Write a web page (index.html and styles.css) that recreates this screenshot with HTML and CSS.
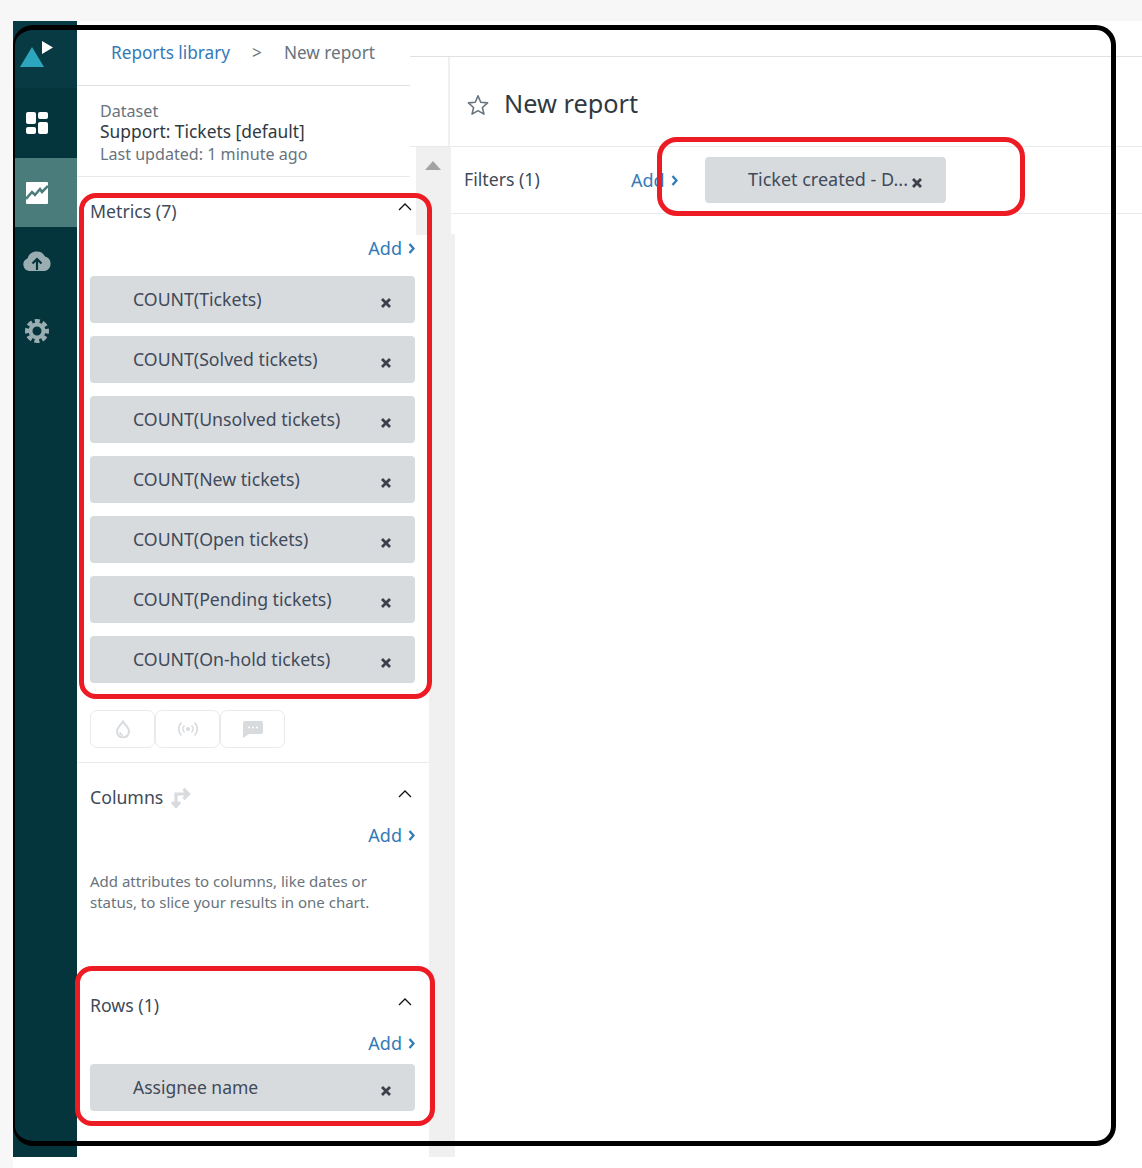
FILE: index.html
```html
<!DOCTYPE html>
<html lang="en">
<head>
<meta charset="utf-8">
<title>New report</title>
<link rel="stylesheet" href="styles.css">
</head>
<body>
<div class="app">
  <nav class="nav">
    <div class="nav-logo">
      <svg width="64" height="67" viewBox="0 0 64 67"><path d="M7 46 L19 26 L31 46Z" fill="#2ba6bd"/><path d="M29 20 V33 L40 26.500Z" fill="#fff"/></svg>
    </div>
    <div class="nav-item first">
      <svg width="22" height="22" viewBox="0 0 22 22" fill="#fff"><rect x="0" y="0" width="10" height="12" rx="2"/><rect x="12" y="0" width="10" height="7" rx="2"/><rect x="0" y="15" width="10" height="7" rx="2"/><rect x="12" y="10" width="10" height="12" rx="2"/></svg>
    </div>
    <div class="nav-item active">
      <svg width="22" height="22" viewBox="0 0 22 22"><rect width="22" height="22" rx="1" fill="#fff"/><path d="M0 17 L6 10 L9 13 L14 7 L16 10 L22 4" fill="none" stroke="#4a7c7b" stroke-width="2.500"/></svg>
    </div>
    <div class="nav-item dim">
      <svg class="cloud" width="30" height="22" viewBox="0 0 30 22"><path d="M7 22 A6.500 6.500 0 0 1 5.500 9.500 A9.500 9.500 0 0 1 23 7.500 A7.500 7.500 0 0 1 23 22Z" fill="#9aaeb1"/><path d="M15 21 V11 M10.500 14.500 L15 10 L19.500 14.500" fill="none" stroke="#04343c" stroke-width="2.200"/></svg>
    </div>
    <div class="nav-item dim">
      <svg width="24" height="24" viewBox="0 0 24 24" fill="none" stroke="#9aaeb1"><circle cx="12" cy="12" r="6.500" stroke-width="4"/><circle cx="12" cy="12" r="10" stroke-width="4" stroke-dasharray="5 2.854" stroke-dashoffset="2.500"/></svg>
    </div>
  </nav>
  <div class="content">
    <aside class="panel">
      <div class="crumbs">
        <a class="link">Reports library</a><span class="sep">&gt;</span><span class="crumb-now">New report</span>
      </div>
      <div class="dataset">
        <div class="muted first-line">Dataset</div>
        <div class="dataset-name">Support: Tickets [default]</div>
        <div class="muted">Last updated: 1 minute ago</div>
      </div>
      <section class="section metrics">
        <div class="sec-head"><span>Metrics (7)</span><svg class="caret" width="14" height="8" viewBox="0 0 14 8"><path d="M1 7 L7 1 L13 7" fill="none" stroke="#111" stroke-width="1.300"/></svg></div>
        <div class="add-row"><a class="link">Add</a><svg class="chev" width="7" height="11" viewBox="0 0 7 11"><path d="M1.500 1 L5.500 5.500 L1.500 10" fill="none" stroke="#337ab7" stroke-width="2.300"/></svg></div>
        <div class="chips">
          <div class="chip"><span>COUNT(Tickets)</span><svg class="x" width="10" height="10" viewBox="0 0 10 10"><path d="M1 1 L9 9 M9 1 L1 9" stroke="#3d3f4a" stroke-width="2.800"/></svg></div>
          <div class="chip"><span>COUNT(Solved tickets)</span><svg class="x" width="10" height="10" viewBox="0 0 10 10"><path d="M1 1 L9 9 M9 1 L1 9" stroke="#3d3f4a" stroke-width="2.800"/></svg></div>
          <div class="chip"><span>COUNT(Unsolved tickets)</span><svg class="x" width="10" height="10" viewBox="0 0 10 10"><path d="M1 1 L9 9 M9 1 L1 9" stroke="#3d3f4a" stroke-width="2.800"/></svg></div>
          <div class="chip"><span>COUNT(New tickets)</span><svg class="x" width="10" height="10" viewBox="0 0 10 10"><path d="M1 1 L9 9 M9 1 L1 9" stroke="#3d3f4a" stroke-width="2.800"/></svg></div>
          <div class="chip"><span>COUNT(Open tickets)</span><svg class="x" width="10" height="10" viewBox="0 0 10 10"><path d="M1 1 L9 9 M9 1 L1 9" stroke="#3d3f4a" stroke-width="2.800"/></svg></div>
          <div class="chip"><span>COUNT(Pending tickets)</span><svg class="x" width="10" height="10" viewBox="0 0 10 10"><path d="M1 1 L9 9 M9 1 L1 9" stroke="#3d3f4a" stroke-width="2.800"/></svg></div>
          <div class="chip"><span>COUNT(On-hold tickets)</span><svg class="x" width="10" height="10" viewBox="0 0 10 10"><path d="M1 1 L9 9 M9 1 L1 9" stroke="#3d3f4a" stroke-width="2.800"/></svg></div>
        </div>
        <div class="toggles">
          <div class="toggle"><svg width="16" height="18" viewBox="0 0 16 18"><path d="M8 1.500 C10 5 14 7.500 14 11.500 A6 6 0 0 1 2 11.500 C2 7.500 6 5 8 1.500Z" fill="none" stroke="#d8dbde" stroke-width="2"/><path d="M5 12 A3 3 0 0 0 8 15" fill="none" stroke="#d8dbde" stroke-width="1.500"/></svg></div>
          <div class="toggle"><svg width="20" height="16" viewBox="0 0 20 16" fill="none" stroke="#d8dbde" stroke-width="1.600"><circle cx="10" cy="8" r="2" fill="#d8dbde" stroke="none"/><path d="M6.500 4.500 A5 5 0 0 0 6.500 11.500 M13.500 4.500 A5 5 0 0 1 13.500 11.500 M3.500 1.500 A9 9 0 0 0 3.500 14.500 M16.500 1.500 A9 9 0 0 1 16.500 14.500"/></svg></div>
          <div class="toggle"><svg width="20" height="17" viewBox="0 0 20 17"><path d="M2 0 H18 A2 2 0 0 1 20 2 V11 A2 2 0 0 1 18 13 H6 L0 17 V2 A2 2 0 0 1 2 0Z" fill="#d8dbde"/><circle cx="6" cy="6.500" r="1" fill="#fff"/><circle cx="10" cy="6.500" r="1" fill="#fff"/><circle cx="14" cy="6.500" r="1" fill="#fff"/></svg></div>
        </div>
      </section>
      <section class="section columns">
        <div class="sec-head"><span class="with-icon">Columns<svg width="20" height="21" viewBox="0 0 20 21" fill="none" stroke="#d8dbde"><path d="M5 19 V7 H17 M12.500 2 L17.500 7 L12.500 12 M1 15 L5 19.500 L9 15" stroke-width="3.200"/></svg></span><svg class="caret" width="14" height="8" viewBox="0 0 14 8"><path d="M1 7 L7 1 L13 7" fill="none" stroke="#111" stroke-width="1.300"/></svg></div>
        <div class="add-row"><a class="link">Add</a><svg class="chev" width="7" height="11" viewBox="0 0 7 11"><path d="M1.500 1 L5.500 5.500 L1.500 10" fill="none" stroke="#337ab7" stroke-width="2.300"/></svg></div>
        <p class="hint">Add attributes to columns, like dates or status, to slice your results in one chart.</p>
      </section>
      <section class="section rows">
        <div class="sec-head"><span>Rows (1)</span><svg class="caret" width="14" height="8" viewBox="0 0 14 8"><path d="M1 7 L7 1 L13 7" fill="none" stroke="#111" stroke-width="1.300"/></svg></div>
        <div class="add-row"><a class="link">Add</a><svg class="chev" width="7" height="11" viewBox="0 0 7 11"><path d="M1.500 1 L5.500 5.500 L1.500 10" fill="none" stroke="#337ab7" stroke-width="2.300"/></svg></div>
        <div class="chips">
          <div class="chip"><span class="tight">Assignee name</span><svg class="x" width="10" height="10" viewBox="0 0 10 10"><path d="M1 1 L9 9 M9 1 L1 9" stroke="#3d3f4a" stroke-width="2.800"/></svg></div>
        </div>
      </section>
    </aside>
    <main class="main">
      <div class="main-top"></div>
      <div class="title-row">
        <div class="title-inner">
          <svg class="star" width="22" height="22" viewBox="0 0 24 24"><path d="M12 2 L15 9 L22.500 9.700 L16.800 14.700 L18.500 22 L12 18.200 L5.500 22 L7.200 14.700 L1.500 9.700 L9 9Z" fill="none" stroke="#68737d" stroke-width="1.700" stroke-linejoin="round"/></svg>
          <h1 class="title">New report</h1>
        </div>
      </div>
      <div class="filter-row">
        <div class="scroll-top"><div class="scroll-arrow"></div></div>
        <div class="filter-content">
          <span class="filter-label">Filters (1)</span>
          <div class="filter-add"><a class="link">Add</a><svg class="chev" width="7" height="11" viewBox="0 0 7 11"><path d="M1.500 1 L5.500 5.500 L1.500 10" fill="none" stroke="#337ab7" stroke-width="2.300"/></svg></div>
          <div class="chip filter-chip"><span>Ticket created - D...</span><svg class="x" width="10" height="10" viewBox="0 0 10 10"><path d="M1 1 L9 9 M9 1 L1 9" stroke="#3d3f4a" stroke-width="2.800"/></svg></div>
        </div>
      </div>
      <div class="main-body"><div class="gutter"></div></div>
    </main>
  </div>
</div>
<div class="mark mark-black"></div>
<div class="mark mark-metrics"></div>
<div class="mark mark-rows"></div>
<div class="mark mark-filter"></div>
</body>
</html>
```
FILE: styles.css
```css
* { box-sizing: border-box; }
html, body { margin: 0; padding: 0; background: #fff; }
body {
  position: relative;
  width: 1142px;
  height: 1168px;
  overflow: hidden;
  font-family: "Noto Sans", "Open Sans", sans-serif;
  font-size: 17.700px;
  color: #3f4a5a;
  background: linear-gradient(#f7f7f7, #f7f7f7) top left / 100% 21px no-repeat,
              linear-gradient(#f7f7f7, #f7f7f7) top left / 13px 100% no-repeat,
              #fff;
}
.app {
  display: flex;
  height: 1157px;
  margin-left: 13px;
  padding-top: 21px;
}
.nav {
  width: 64px;
  flex: none;
  background: #04343c;
}
.nav-logo {
  height: 67px;
  background: #073a43;
}
.nav-logo svg { display: block; }
.nav-item {
  height: 69px;
  display: flex;
  align-items: center;
  justify-content: center;
  padding-right: 16px;
}
.nav-item.first { height: 70px; }
.nav-item.active { background: #4a7c7b; }
.cloud { margin-bottom: 3px; }
.content {
  flex: 1;
  display: flex;
  min-width: 0;
}
.panel {
  width: 333px;
  flex: none;
  position: relative;
  z-index: 1;
}
.crumbs {
  height: 65px;
  padding-left: 34px;
  padding-top: 18px;
  border-bottom: 1px solid #e0e2e4;
  font-size: 17.200px;
  line-height: 28px;
  white-space: nowrap;
}
.link { color: #337ab7; }
.sep { margin: 0 22px 0 22px; color: #68737d; }
.crumb-now { color: #68737d; }
.dataset {
  height: 91px;
  padding: 15px 0 0 23px;
  border-bottom: 1px solid #e8eaec;
  line-height: 21px;
}
.muted { color: #68737d; font-size: 16.100px; }
.first-line { margin-bottom: -1px; }
.dataset-name { font-size: 17.400px; color: #2f3941; margin-bottom: 2px; }
.section {
  width: 352px;
  padding: 0 14px 0 13px;
}
.metrics { padding-top: 23px; height: 586px; border-bottom: 1px solid #e8eaec; }
.sec-head {
  display: flex;
  justify-content: space-between;
  align-items: flex-start;
  height: 24px;
  line-height: 24px;
}
.sec-head > span { position: relative; top: -1px; }
.caret { margin: 4px 3px 0 0; }
.metrics .caret { margin-top: 3px; }
.add-row {
  display: flex;
  align-items: center;
  justify-content: flex-end;
  gap: 6px;
  height: 28px;
  margin-top: 11px;
  font-size: 18px;
}
.metrics .add-row { margin-top: 10px; }
.chips {
  display: flex;
  flex-direction: column;
  gap: 13px;
  margin-top: 14px;
}
.rows .chips { margin-top: 7px; }
.chip {
  display: flex;
  justify-content: space-between;
  align-items: center;
  height: 47px;
  padding: 0 24px 0 43px;
  background: #d8dbde;
  border-radius: 4px;
  line-height: 24px;
}
.chip span { position: relative; top: -1px; }
.chip .tight { font-size: 17.500px; }
.x { position: relative; top: 3px; }
.toggles {
  display: flex;
  margin-top: 27px;
}
.toggle {
  width: 65px;
  height: 38px;
  display: flex;
  align-items: center;
  justify-content: center;
  border: 1px solid #e8eaec;
  border-radius: 7px;
}
.columns { padding-top: 23px; height: 204px; }
.with-icon { display: flex; align-items: center; gap: 8px; }
.hint {
  margin: 22px 0 0;
  font-size: 15px;
  line-height: 21px;
  color: #68737d;
  width: 300px;
}
.rows { padding-top: 27px; }
.main {
  flex: 1;
  min-width: 0;
  display: flex;
  flex-direction: column;
}
.main-top {
  height: 36px;
  flex: none;
  border-bottom: 1px solid #dfe1e3;
}
.title-row {
  height: 90px;
  flex: none;
  padding-left: 38px;
  border-bottom: 1px solid #e8eaec;
}
.title-inner {
  height: 100%;
  display: flex;
  align-items: center;
  gap: 15px;
  padding-left: 17px;
  border-left: 2px solid #eef0f1;
}
.star { position: relative; top: 3px; }
.title {
  margin: 0;
  font-size: 25.300px;
  font-weight: 400;
  color: #2f3941;
  position: relative;
  top: 1px;
}
.filter-row {
  height: 67px;
  flex: none;
  display: flex;
}
.scroll-top {
  width: 35px;
  height: 88px;
  margin-left: 6px;
  padding: 14px 0 0 9px;
  background: #f0f0f0;
  flex: none;
}
.scroll-arrow {
  width: 0;
  height: 0;
  border-left: 8px solid transparent;
  border-right: 8px solid transparent;
  border-bottom: 9px solid #a3a3a3;
}
.filter-content {
  flex: 1;
  display: flex;
  align-items: center;
  padding-left: 13px;
  border-bottom: 1px solid #e8eaec;
}
.filter-label { width: 167px; flex: none; position: relative; top: -1px; }
.filter-add {
  display: flex;
  align-items: center;
  gap: 6px;
  width: 74px;
  flex: none;
  font-size: 18px;
}
.filter-chip {
  width: 241px;
  height: 46px;
  padding: 0 24px 0 43px;
  font-size: 18px;
}
.main-body {
  flex: 1;
  padding: 20px 0 0 19px;
}
.gutter {
  width: 26px;
  height: 100%;
  background: #f0f0f0;
}
.mark {
  position: absolute;
  z-index: 5;
  pointer-events: none;
}
.mark-black {
  left: 13px;
  top: 25px;
  width: 1103px;
  height: 1121px;
  border: 5px solid #000;
  border-left-width: 2px;
  border-radius: 20px;
}
.mark-metrics {
  left: 79px;
  top: 193px;
  width: 353px;
  height: 506px;
  border: 5px solid #ed1c24;
  border-radius: 17px;
}
.mark-rows {
  left: 75px;
  top: 966px;
  width: 360px;
  height: 160px;
  border: 5px solid #ed1c24;
  border-radius: 17px;
}
.mark-filter {
  left: 657px;
  top: 137px;
  width: 368px;
  height: 79px;
  border: 5px solid #ed1c24;
  border-radius: 20px;
}
```
